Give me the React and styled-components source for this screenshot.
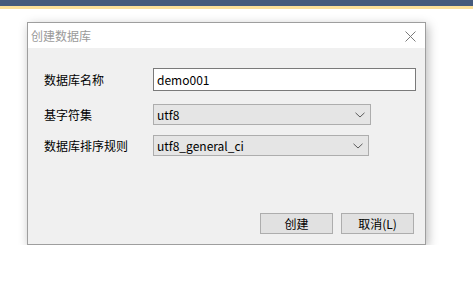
import styled, { createGlobalStyle } from "styled-components";

const GlobalStyle = createGlobalStyle`
    html, body {
        margin: 0;
        padding: 0;
        background: #ffffff;
        font-family: "Noto Sans CJK SC", "Noto Sans", sans-serif;
    }
`

const TopBar = styled.div`
    height: 6px;
    background-color: #455a7c;
    border-bottom: 3px solid #fbdf98;
`

const Stage = styled.div`
    padding: 13px 0 0 27px;
`

const Dialog = styled.div`
    width: 397px;
    border: 1px solid #9e9e9e;
    background-color: #f0f0f0;
    box-shadow: 2px 3px 10px rgba(0, 0, 0, 0.28);
    display: flex;
    flex-direction: column;
`

const TitleBar = styled.div`
    height: 25px;
    background-color: #ffffff;
    display: flex;
    align-items: center;
    justify-content: space-between;
    padding: 0 9px 0 3px;

    h3 {
        margin: 0;
        font-size: 12px;
        font-weight: normal;
        color: #9a9a9a;
        line-height: 1;
    }
`

const CloseIcon = styled.svg`
    width: 11px;
    height: 11px;
    margin-top: 1px;
`

const Body = styled.div`
    display: flex;
    flex-direction: column;
    padding: 20px 11px 10px 16px;
    height: 196px;
    box-sizing: border-box;
`

const Form = styled.div`
    display: flex;
    flex-direction: column;
    flex: 1;
`

const Row = styled.div`
    display: flex;
    align-items: center;
    margin-top: ${p => p.$gap || 0}px;
`

const Label = styled.label`
    width: 109px;
    flex-shrink: 0;
    font-size: 12px;
    color: #000000;
    line-height: 1;
`

const TextInput = styled.input`
    box-sizing: border-box;
    flex-shrink: 0;
    width: 263px;
    height: 23px;
    border: 1px solid #7a7a7a;
    background: #ffffff;
    padding: 0 3px;
    font-family: "Noto Sans CJK SC", "Noto Sans", sans-serif;
    font-size: 12px;
    color: #000000;
    outline: none;
`

const SelectBox = styled.div`
    box-sizing: border-box;
    flex-shrink: 0;
    width: ${p => p.$width}px;
    height: 21px;
    border: 1px solid #adadad;
    background-color: #e5e5e5;
    display: flex;
    align-items: center;
    justify-content: space-between;
    padding: 0 5px 0 3px;
    font-size: 12px;
    color: #000000;
`

const Chevron = styled.svg`
    width: 10px;
    height: 6px;
`

const Btns = styled.div`
    display: flex;
    justify-content: flex-end;
    gap: 8px;
`

const Button = styled.button`
    box-sizing: border-box;
    width: 73px;
    height: 21px;
    border: 1px solid #adadad;
    background-color: #e1e1e1;
    font-family: "Noto Sans CJK SC", "Noto Sans", sans-serif;
    font-size: 12px;
    color: #000000;
    padding: 0;
    line-height: 1;
`

function Select({ value, width }) {
    return (
        <SelectBox $width={width}>
            <span>{value}</span>
            <Chevron viewBox="0 0 10 6">
                <path d="M0.5 0.8 L5 5 L9.5 0.8" fill="none" stroke="#5a5a5a" strokeWidth="1" />
            </Chevron>
        </SelectBox>
    )
}

export default function App() {
    return (
        <>
            <GlobalStyle />
            <TopBar />
            <Stage>
                <Dialog>
                    <TitleBar>
                        <h3>创建数据库</h3>
                        <CloseIcon viewBox="0 0 11 11">
                            <path d="M0.5 0.5 L10.5 10.5 M10.5 0.5 L0.5 10.5" stroke="#7a7a7a" strokeWidth="1" />
                        </CloseIcon>
                    </TitleBar>
                    <Body>
                        <Form>
                            <Row>
                                <Label>数据库名称</Label>
                                <TextInput defaultValue="demo001" />
                            </Row>
                            <Row $gap={13}>
                                <Label>基字符集</Label>
                                <Select value="utf8" width={218} />
                            </Row>
                            <Row $gap={10}>
                                <Label>数据库排序规则</Label>
                                <Select value="utf8_general_ci" width={216} />
                            </Row>
                        </Form>
                        <Btns>
                            <Button type="submit">创建</Button>
                            <Button type="button">取消(L)</Button>
                        </Btns>
                    </Body>
                </Dialog>
            </Stage>
        </>
    )
}
